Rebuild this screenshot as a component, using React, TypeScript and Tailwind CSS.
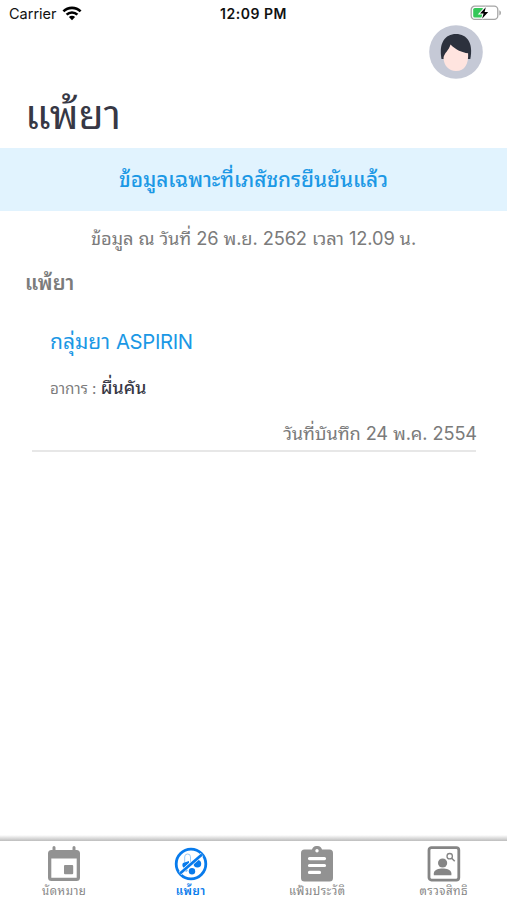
import React from "react";

const thai = "font-['Inter','Noto_Sans_Thai_Looped','Loma','Garuda','Waree','Noto_Sans_Thai',sans-serif]";

function Wifi() {
  return (
    <svg width="20" height="15" viewBox="0 0 20 15" fill="none" stroke="#000" strokeWidth="2.6">
      <path d="M1.4 5.4a12.2 12.2 0 0 1 17.2 0" />
      <path d="M4.6 8.7a7.6 7.6 0 0 1 10.8 0" />
      <path d="M10 14.2 6.9 11a4.4 4.4 0 0 1 6.2 0z" fill="#000" stroke="none" />
    </svg>
  );
}

function Battery() {
  return (
    <svg width="32" height="16" viewBox="0 0 32 16">
      <rect x="1.2" y="1.2" width="26.6" height="13.2" rx="3.6" fill="#fff" stroke="#a5a5a5" strokeWidth="1.3" />
      <path d="M29.3 5.2c2.2.8 2.2 4.4 0 5.2z" fill="#a5a5a5" />
      <rect x="3.2" y="3" width="10.3" height="9.6" rx="1.6" fill="#35c759" />
      <path d="M15.8 2.2 10 8.6h3.6l-1.5 5.2 6.1-6.7h-3.6z" fill="#000" stroke="#fff" strokeWidth="2" paintOrder="stroke" />
    </svg>
  );
}

function Avatar() {
  return (
    <svg width="54" height="54" viewBox="0 0 54 54">
      <circle cx="27" cy="27" r="26.8" fill="#c5c9d6" />
      <path d="M12.5 34C9.5 18 16 9 27 9s17.5 9 14.3 25z" fill="#2c313d" />
      <path d="M14.5 33C15 28 20 25.5 21.5 19.5c5.5 5.5 11.4 8 17.6 8.8C39.7 39 36 46 27 46c-7.5 0-12-5.5-12.5-13z" fill="#ffe4df" />
    </svg>
  );
}

function CalendarIcon() {
  return (
    <svg width="34" height="36" viewBox="0 0 34 36" fill="#929292">
      <path fillRule="evenodd" d="M5.5 1.5a1.5 1.5 0 0 1 3 0V4h17V1.5a1.5 1.5 0 0 1 3 0V4h1a3.5 3.5 0 0 1 3.5 3.5v24A3.5 3.5 0 0 1 29.5 35h-25A3.5 3.5 0 0 1 1 31.5v-24A3.5 3.5 0 0 1 4.5 4h1zM4.3 12.5v19.2h25.4V12.5z" />
      <rect x="17" y="19" width="9.2" height="9.2" rx="1" />
    </svg>
  );
}

function AllergyIcon() {
  return (
    <svg width="34" height="34" viewBox="0 0 34 34" fill="#087bec">
      <circle cx="17" cy="17" r="14.8" fill="none" stroke="#087bec" strokeWidth="2.8" />
      <rect x="10.7" y="7" width="5.8" height="11" rx="2.9" fill="none" stroke="#9bcaf7" strokeWidth="1" />
      <path d="m9 16 6-2v2l-5 5a3.5 3.5 0 0 1-1-5z" />
      <circle cx="23.4" cy="16.8" r="3.8" />
      <path d="m20 14 5-4v5z" />
      <circle cx="18" cy="24.3" r="3.2" />
      <circle cx="12" cy="23" r="1.5" />
      <path d="m6 26.5 22-19" stroke="#fff" strokeWidth="4" />
      <path d="M6 26.5 28 7.5" stroke="#087bec" strokeWidth="2.8" />
    </svg>
  );
}

function ClipboardIcon() {
  return (
    <svg width="32" height="36" viewBox="0 0 32 36">
      <path d="M3.5 3.5H11a5.3 5.3 0 0 1 10 0h7.5A3.5 3.5 0 0 1 32 7v25a3.5 3.5 0 0 1-3.5 3.5h-25A3.5 3.5 0 0 1 0 32V7a3.5 3.5 0 0 1 3.5-3.5z" fill="#929292" />
      <circle cx="16" cy="4.7" r="1.7" fill="#fff" />
      <path d="M8.5 12.6h15M8.5 19.5h15M8.5 26.4h10" stroke="#fff" strokeWidth="3.2" strokeLinecap="round" />
    </svg>
  );
}

function RightsIcon() {
  return (
    <svg width="34" height="36" viewBox="0 0 34 36" fill="#858585">
      <rect x="2" y="1.6" width="29.8" height="32.5" rx="2.5" fill="none" stroke="#858585" strokeWidth="2.8" />
      <circle cx="15.6" cy="17" r="4.6" />
      <path d="M6.8 29.2v-1.6c0-3.8 5.3-5 8.8-5s8.8 1.2 8.8 5v1.6z" />
      <circle cx="22.7" cy="10.2" r="2.7" fill="none" stroke="#858585" strokeWidth="1.3" />
      <path d="m24.7 12.2 3 3" stroke="#858585" strokeWidth="1.5" />
    </svg>
  );
}

function Tab({ icon, label, color }: { icon: React.ReactNode; label: string; color: string }) {
  return (
    <button className={`flex flex-1 flex-col items-center pt-[5px] ${color}`}>
      <span className="flex h-9 items-center">{icon}</span>
      <span className="mt-px whitespace-nowrap text-[11.5px] leading-4 tracking-[0.5px]">{label}</span>
    </button>
  );
}

export default function App() {
  return (
    <div className={`flex h-[900px] w-[507px] flex-col overflow-hidden bg-white ${thai}`}>
      <div className="grid h-[26px] grid-cols-3 items-center text-[#111]">
        <div className="flex items-center gap-[5px] pl-[9px]">
          <span className="pt-px text-[14.5px]">Carrier</span>
          <Wifi />
        </div>
        <span className="text-center text-[14px] font-semibold tracking-[0.5px]">12:09 PM</span>
        <div className="flex justify-end pr-[5px]">
          <Battery />
        </div>
      </div>
      <header className="flex h-[122px] flex-col pl-[25px] pr-[24px]">
        <div className="-mt-px flex h-[54px] justify-end">
          <Avatar />
        </div>
        <h1 className="mt-px text-[41px] leading-[68px] text-[#373845]">แพ้ยา</h1>
      </header>
      <div className="flex h-[63px] items-center justify-center bg-[#e1f3fe] text-[20.7px] font-medium text-[#1b98e5]">
        ข้อมูลเฉพาะที่เภสัชกรยืนยันแล้ว
      </div>
      <main className="flex flex-1 flex-col text-[#7b7b7b]">
        <p className="mt-[11px] text-center text-[18.3px] leading-8 tracking-[-0.12px]">
          ข้อมูล ณ วันที่ 26 พ.ย. 2562 เวลา 12.09 น.
        </p>
        <h2 className="mt-[13px] pl-[25px] text-[20.3px] font-semibold leading-8">แพ้ยา</h2>
        <article className="ml-8 mr-[31px] mt-[27px] flex h-[126px] flex-col border-b-2 border-[#e7e7e7] pl-[18px]">
          <h3 className="h-8 text-[21px] leading-8 text-[#1b98e5]">
            กลุ่มยา <span className="text-[20.3px] tracking-[-0.35px]">ASPIRIN</span>
          </h3>
          <p className="mt-[14px] h-8 text-[15.2px] leading-8">
            อาการ : <span className="text-[17.8px] font-medium text-[#373845]">ผื่นคัน</span>
          </p>
          <p className="-mr-px mt-[13px] text-right text-[18.2px] leading-8 tracking-[-0.1px]">วันที่บันทึก 24 พ.ค. 2554</p>
        </article>
      </main>
      <div className="h-[6px] bg-linear-to-b from-white to-[#bdbdbd]" />
      <nav className="flex h-[59px] pl-px">
        <Tab icon={<CalendarIcon />} label="นัดหมาย" color="text-[#858585]" />
        <Tab icon={<AllergyIcon />} label="แพ้ยา" color="text-[#087bec] font-semibold" />
        <Tab icon={<ClipboardIcon />} label="แฟ้มประวัติ" color="text-[#858585]" />
        <Tab icon={<RightsIcon />} label="ตรวจสิทธิ" color="text-[#858585]" />
      </nav>
    </div>
  );
}
